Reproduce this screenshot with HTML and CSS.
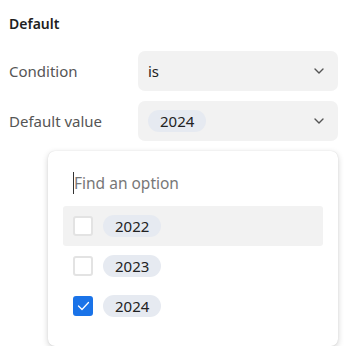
FILE: index.html
```html
<!DOCTYPE html>
<html lang="en">

<head>
    <meta charset="UTF-8">
    <meta name="viewport" content="width=device-width, initial-scale=1.0">
    <title>Default value</title>
    <link rel="stylesheet" href="styles.css">
</head>

<body>
    <div class="panel">
        <h3 class="panel-title">Default</h3>

        <div class="field">
            <span class="field-label">Condition</span>
            <div class="select">
                <span class="select-value">is</span>
                <svg class="chevron" width="10" height="6" viewBox="0 0 10 6"><path d="M1 1l4 4 4-4" fill="none" stroke="#555" stroke-width="1.4" stroke-linecap="round" stroke-linejoin="round"/></svg>
            </div>
        </div>

        <div class="field">
            <span class="field-label">Default value</span>
            <div class="select">
                <span class="tag">2024</span>
                <svg class="chevron" width="10" height="6" viewBox="0 0 10 6"><path d="M1 1l4 4 4-4" fill="none" stroke="#555" stroke-width="1.4" stroke-linecap="round" stroke-linejoin="round"/></svg>
            </div>
        </div>

        <!-- 下拉选项 -->
        <div class="dropdown">
            <div class="search">
                <span class="caret"></span>
                <span class="placeholder">Find an option</span>
            </div>
            <ul class="options">
                <li class="option active">
                    <span class="checkbox"></span>
                    <span class="tag">2022</span>
                </li>
                <li class="option">
                    <span class="checkbox"></span>
                    <span class="tag">2023</span>
                </li>
                <li class="option">
                    <span class="checkbox checked">
                        <svg width="13" height="10" viewBox="0 0 13 10"><path d="M1.5 5l3.5 3.5 6.5-7" fill="none" stroke="#fff" stroke-width="1.3" stroke-linecap="round" stroke-linejoin="round"/></svg>
                    </span>
                    <span class="tag">2024</span>
                </li>
            </ul>
        </div>
    </div>
</body>

</html>
```

FILE: styles.css
```css
/* 全局样式 */
body {
    font-family: 'Noto Sans', 'Open Sans', sans-serif;
    background-color: #ffffff;
    margin: 0;
    color: #222;
}

.panel {
    padding: 14px 13px 0 9px;
}

.panel-title {
    margin: 0 0 17px;
    font-size: 14px;
    font-weight: 600;
    line-height: 20px;
    color: #1f1f1f;
}

/* 表单行 */
.field {
    display: flex;
    align-items: center;
    margin-bottom: 10px;
}

.field-label {
    width: 129px;
    font-size: 15px;
    color: #555;
}

.select {
    flex: 1;
    height: 40px;
    display: flex;
    align-items: center;
    justify-content: space-between;
    padding: 0 14px 0 10px;
    background-color: #f2f2f2;
    border-radius: 7px;
    box-sizing: border-box;
}

.select-value {
    font-size: 15px;
    color: #222;
}

.tag {
    display: inline-block;
    height: 22px;
    line-height: 22px;
    padding: 0 12px;
    border-radius: 11px;
    background-color: #e6eaf1;
    font-size: 15px;
    color: #222;
}

/* 下拉框 */
.dropdown {
    margin: 0 0 0 39px;
    width: 290px;
    background-color: #fff;
    border-radius: 7px;
    box-shadow: 0 2px 6px rgba(0, 0, 0, 0.18), 0 0 1px rgba(0, 0, 0, 0.15);
    padding: 0 15px 20px;
    box-sizing: border-box;
}

.search {
    height: 55px;
    box-sizing: border-box;
    padding: 8px 0 0 10px;
    display: flex;
    align-items: center;
}

.caret {
    width: 1px;
    height: 22px;
    background-color: #333;
}

.placeholder {
    font-size: 15.5px;
    color: #777;
}

.options {
    list-style: none;
    margin: 0;
    padding: 0;
}

.option {
    height: 40px;
    display: flex;
    align-items: center;
    gap: 10px;
    padding-left: 10px;
    border-radius: 3px;
}

.option.active {
    background-color: #f2f2f2;
}

.checkbox {
    width: 20px;
    height: 20px;
    box-sizing: border-box;
    border: 2px solid #e3e3e3;
    border-radius: 3px;
    background-color: #fff;
    display: flex;
    align-items: center;
    justify-content: center;
}

.checkbox.checked {
    background-color: #1a73e8;
    border-color: #1a73e8;
}
```
